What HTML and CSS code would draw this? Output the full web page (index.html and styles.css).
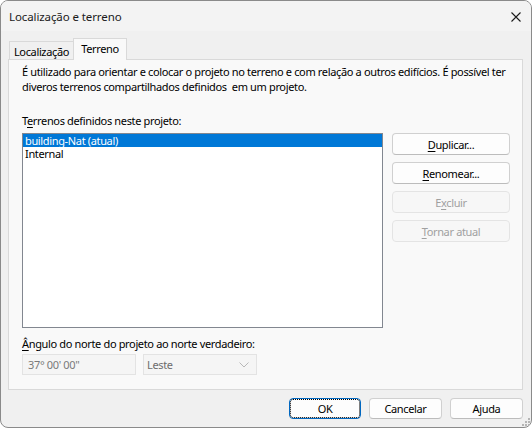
FILE: index.html
```html
<!DOCTYPE html>
<html lang="pt">
<head>
<meta charset="utf-8">
<title>Localização e terreno</title>
<link rel="stylesheet" href="styles.css">
</head>
<body>
<div class="window">
  <div class="titlebar">
    <span class="title">Localização e terreno</span>
    <svg class="close" width="10" height="10" viewBox="0 0 10 10"><path d="M0.5 0.5 L9.5 9.5 M9.5 0.5 L0.5 9.5" stroke="#1b1b1b" stroke-width="1.1" fill="none"/></svg>
  </div>
  <div class="body">
    <div class="tabs">
      <div class="tab tab-loc">Localização</div>
      <div class="tab tab-active">Terreno</div>
    </div>
    <div class="panel">
      <p class="desc">É utilizado para orientar e colocar o projeto no terreno e com relação a outros edifícios. É possível ter<br>diveros terrenos compartilhados definidos&nbsp; em um projeto.</p>
      <div class="label">T<u>e</u>rrenos definidos neste projeto:</div>
      <div class="sites">
        <div class="listbox">
          <div class="item selected">building-Nat (atual)</div>
          <div class="item">Internal</div>
        </div>
        <div class="actions">
          <button class="btn"><u>D</u>uplicar...</button>
          <button class="btn"><u>R</u>enomear...</button>
          <button class="btn" disabled>E<u>x</u>cluir</button>
          <button class="btn" disabled><u>T</u>ornar atual</button>
        </div>
      </div>
      <div class="label angle-label"><u>Â</u>ngulo do norte do projeto ao norte verdadeiro:</div>
      <div class="angle-row">
        <div class="field">37° 00' 00"</div>
        <div class="field select">
          <span>Leste</span>
          <svg width="10" height="6" viewBox="0 0 10 6"><path d="M0.5 0.5 L5 5 L9.5 0.5" stroke="#b8b8b8" stroke-width="1" fill="none"/></svg>
        </div>
      </div>
    </div>
    <div class="footer">
      <button class="btn fbtn default">OK</button>
      <button class="btn fbtn">Cancelar</button>
      <button class="btn fbtn">Ajuda</button>
    </div>
  </div>
  <svg class="grip" width="8" height="8" viewBox="0 0 8 8">
    <rect x="6" y="0" width="2" height="2" fill="#b5b5b5"/>
    <rect x="3" y="3" width="2" height="2" fill="#b5b5b5"/>
    <rect x="6" y="3" width="2" height="2" fill="#b5b5b5"/>
    <rect x="0" y="6" width="2" height="2" fill="#b5b5b5"/>
    <rect x="3" y="6" width="2" height="2" fill="#b5b5b5"/>
    <rect x="6" y="6" width="2" height="2" fill="#b5b5b5"/>
  </svg>
</div>
</body>
</html>
```
FILE: styles.css
```css
html, body {
  margin: 0;
  padding: 0;
  background: #ffffff;
}
body {
  font-family: "Noto Sans", "Liberation Sans", sans-serif;
  font-size: 11px;
  letter-spacing: -0.35px;
  color: #000;
}
u {
  text-decoration: underline;
  text-underline-offset: 2px;
}
.window {
  position: relative;
  width: 532px;
  height: 428px;
  box-sizing: border-box;
  border: 1px solid #8a8a8a;
  border-radius: 8px;
  background: #f0f0f0;
  overflow: hidden;
  display: flex;
  flex-direction: column;
}
.titlebar {
  height: 30px;
  flex: none;
  background: #f3f3f3;
  display: flex;
  align-items: center;
  justify-content: space-between;
  padding-left: 8px;
  padding-right: 10px;
  box-sizing: border-box;
}
.title {
  font-size: 11.5px;
  letter-spacing: -0.1px;
  color: #1a1a1a;
  margin-top: 1px;
}
.close {
  margin-top: 1px;
}
.body {
  flex: 1;
  padding: 7px 8px 0 7px;
  display: flex;
  flex-direction: column;
}
.tabs {
  display: flex;
  height: 21px;
  padding-left: 1px;
  position: relative;
  z-index: 1;
}
.tab {
  box-sizing: border-box;
  border: 1px solid #d9d9d9;
  border-bottom: none;
  background: #f0f0f0;
  display: flex;
  justify-content: center;
  align-items: center;
}
.tab-loc {
  margin-top: 3px;
  height: 18px;
  width: 64px;
  border-right: none;
  padding-top: 2px;
}
.tab-active {
  height: 22px;
  width: 54px;
  background: #f9f9f9;
  padding-bottom: 3px;
}
.panel {
  box-sizing: border-box;
  width: 515px;
  height: 331px;
  border: 1px solid #d9d9d9;
  background: #f9f9f9;
  padding: 4px 12px 0 13px;
  display: flex;
  flex-direction: column;
}
.desc {
  margin: 0;
  line-height: 15px;
  white-space: nowrap;
}
.label {
  margin-top: 19px;
  line-height: 15px;
}
.sites {
  display: flex;
  margin-top: 5px;
}
.listbox {
  box-sizing: border-box;
  width: 361px;
  height: 195px;
  border: 1px solid #828790;
  background: #ffffff;
  padding-top: 0;
}
.item {
  height: 13px;
  line-height: 13px;
  padding-left: 2px;
}
.item.selected {
  background: #0078d7;
  color: #ffffff;
}
.actions {
  margin-left: 9px;
  display: flex;
  flex-direction: column;
  gap: 7px;
}
.btn {
  font-family: inherit;
  font-size: 11px;
  letter-spacing: -0.35px;
  color: #000;
  box-sizing: border-box;
  width: 118px;
  height: 22px;
  border: 1px solid #d0d0d0;
  border-bottom-color: #bcbcbc;
  border-radius: 4px;
  background: #fdfdfd;
  padding: 0;
}
.btn:disabled {
  color: #a0a0a0;
  background: #f7f7f7;
  border-color: #e4e4e4;
}
.angle-label {
  margin-top: 8px;
}
.angle-row {
  display: flex;
  gap: 7px;
  margin-top: 3px;
}
.field {
  box-sizing: border-box;
  width: 114px;
  height: 21px;
  border: 1px solid #e3e3e3;
  background: #f5f5f5;
  color: #7a7a7a;
  display: flex;
  align-items: center;
  padding-left: 5px;
}
.select {
  color: #6d6d6d;
  padding-left: 3px;
  padding-right: 7px;
  justify-content: space-between;
}
.footer {
  display: flex;
  justify-content: flex-end;
  gap: 8px;
  margin-top: 8px;
}
.fbtn {
  width: 73px;
  height: 21px;
}
.default {
  width: 72px;
  border-color: #0067c0;
  outline: 1px dotted #000;
  outline-offset: -2px;
}
.grip {
  position: absolute;
  right: 1px;
  bottom: 1px;
}
```
